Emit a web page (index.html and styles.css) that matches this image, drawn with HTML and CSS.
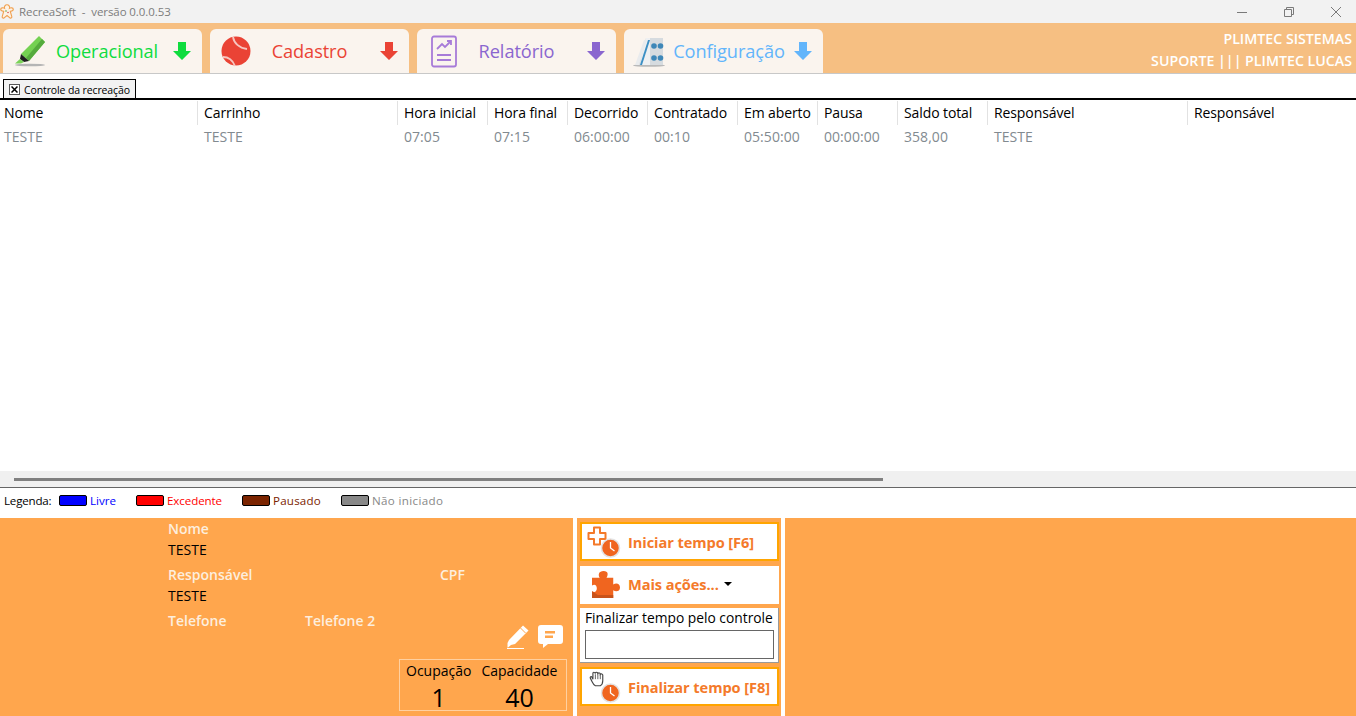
FILE: index.html
```html
<!DOCTYPE html>
<html lang="pt">
<head>
<meta charset="utf-8">
<title>RecreaSoft</title>
<link rel="stylesheet" href="styles.css">
</head>
<body>
<div class="app">
  <header class="titlebar">
    <svg class="logo" width="14" height="16" viewBox="0 0 14 16"><path d="M7 .8a2.600 2.600 0 0 1 2.500 3.400c1-.6 3.700-.6 3.800 1 .1 1.500-2 2-3 2.200l1.500 5.300c.3 1.200-1.400 2-2.200 1L7 11.500l-2.600 2.200c-.8 1-2.500.2-2.200-1l1.500-5.300c-1-.2-3.100-.7-3-2.200.1-1.600 2.800-1.600 3.800-1A2.600 2.600 0 0 1 7 .8z" fill="#fdf3e6" stroke="#f0a050" stroke-width="1.100"/><circle cx="6" cy="7" r=".8" fill="#5aa34a"/><circle cx="8" cy="8.500" r=".8" fill="#d9534f"/></svg>
    <span class="app-title">RecreaSoft &nbsp;-&nbsp; versão 0.0.0.53</span>
    <div class="window-controls">
      <svg width="12" height="12" viewBox="0 0 12 12"><path d="M1 6.500h10" stroke="#7a7a7a" fill="none"/></svg>
      <svg width="12" height="12" viewBox="0 0 12 12"><path d="M1.500 3.500h7v7h-7zM3.500 3.500v-2h7v7h-2" stroke="#7a7a7a" fill="none"/></svg>
      <svg width="12" height="12" viewBox="0 0 12 12"><path d="M1 1l10 10M11 1L1 11" stroke="#7a7a7a" fill="none"/></svg>
    </div>
  </header>

  <nav class="toolbar">
    <div class="tab tab-green">
      <svg class="tab-icon" width="40" height="36" viewBox="0 0 40 36"><ellipse cx="20" cy="32" rx="15" ry="1.300" fill="#b5b5b5"/><path d="M29 3l6 6-16 19-8-7z" fill="#74d152"/><path d="M32 6l3 3-16 19-3-3z" fill="#55ab3d"/><path d="M11 21l8 7-5 1-4-3z" fill="#1f1f1f"/><path d="M10 26l4 3-3 1.500H5z" fill="#7ad257"/></svg>
      <span class="tab-label">Operacional</span>
      <svg class="tab-arrow" width="18" height="18" viewBox="0 0 18 18"><path d="M5 0h8v9h5l-9 9-9-9h5z" fill="currentColor"/></svg>
    </div>
    <div class="tab tab-red">
      <svg class="tab-icon" width="40" height="36" viewBox="0 0 40 36"><circle cx="19" cy="18" r="14.500" fill="#ea4335"/><path d="M16 4c1 6 6 11 14 12M6 24c6 0 10 4 12 9" stroke="#f6c6c0" stroke-width="1.800" fill="none"/></svg>
      <span class="tab-label">Cadastro</span>
      <svg class="tab-arrow" width="18" height="18" viewBox="0 0 18 18"><path d="M5 0h8v9h5l-9 9-9-9h5z" fill="currentColor"/></svg>
    </div>
    <div class="tab tab-purple">
      <svg class="tab-icon" width="40" height="36" viewBox="0 0 40 36"><rect x="8" y="3.500" width="24" height="30" rx="2" fill="none" stroke="#a77bd8" stroke-width="1.800"/><path d="M13 16l5-5 3 3 6-6M23 8h4v4M13 22h14M13 27h14" fill="none" stroke="#a77bd8" stroke-width="1.800"/></svg>
      <span class="tab-label">Relatório</span>
      <svg class="tab-arrow" width="18" height="18" viewBox="0 0 18 18"><path d="M5 0h8v9h5l-9 9-9-9h5z" fill="currentColor"/></svg>
    </div>
    <div class="tab tab-blue">
      <svg class="tab-icon" width="40" height="36" viewBox="0 0 40 36"><ellipse cx="18" cy="32.500" rx="16" ry="1.300" fill="#b9b9b9"/><path d="M15 5h17v27H7z" fill="#d6dbdf"/><path d="M15 5h4v27H9z" fill="#eef0f2"/><path d="M4 32L13 7h3L8 32z" fill="#e9ebed"/><path d="M9 32l8-25h2l-8 25z" fill="#3c8fc4"/><circle cx="23" cy="13" r="2.800" fill="#3e87b8"/><circle cx="29.500" cy="13" r="2.800" fill="#3e87b8"/><circle cx="23" cy="25" r="2.800" fill="#3e87b8"/><circle cx="29.500" cy="25" r="2.800" fill="#3e87b8"/></svg>
      <span class="tab-label">Configuração</span>
      <svg class="tab-arrow" width="18" height="18" viewBox="0 0 18 18"><path d="M5 0h8v9h5l-9 9-9-9h5z" fill="currentColor"/></svg>
    </div>
    <div class="user-info">
      <div>PLIMTEC SISTEMAS</div>
      <div>SUPORTE ||| PLIMTEC LUCAS</div>
    </div>
  </nav>

  <div class="doc-strip">
    <div class="doc-tab">
      <span class="doc-close"><svg width="7" height="7" viewBox="0 0 7 7"><path d="M.5.500l6 6M6.500.500l-6 6" stroke="#000" stroke-width="1.500"/></svg></span>
      <span>Controle da recreação</span>
    </div>
  </div>

  <main class="grid-area">
    <div class="row row-head">
      <div class="cell">Nome</div><div class="cell">Carrinho</div><div class="cell">Hora inicial</div><div class="cell">Hora final</div><div class="cell">Decorrido</div><div class="cell">Contratado</div><div class="cell">Em aberto</div><div class="cell">Pausa</div><div class="cell">Saldo total</div><div class="cell">Responsável</div><div class="cell">Responsável</div>
    </div>
    <div class="row row-data">
      <div class="cell">TESTE</div><div class="cell">TESTE</div><div class="cell">07:05</div><div class="cell">07:15</div><div class="cell">06:00:00</div><div class="cell">00:10</div><div class="cell">05:50:00</div><div class="cell">00:00:00</div><div class="cell">358,00</div><div class="cell">TESTE</div><div class="cell"></div>
    </div>
  </main>

  <div class="hscroll"><div class="hscroll-thumb"></div></div>

  <div class="legend">
    <span class="legend-title">Legenda:</span>
    <span class="legend-item c-blue"><i class="swatch"></i>Livre</span>
    <span class="legend-item c-red"><i class="swatch"></i>Excedente</span>
    <span class="legend-item c-brown"><i class="swatch"></i>Pausado</span>
    <span class="legend-item c-gray"><i class="swatch"></i>Não iniciado</span>
  </div>

  <section class="bottom">
    <div class="info-panel">
      <div class="field-label">Nome</div>
      <div class="field-value">TESTE</div>
      <div class="field-row"><span class="field-label w-resp">Responsável</span><span class="field-label">CPF</span></div>
      <div class="field-value">TESTE</div>
      <div class="field-row"><span class="field-label w-tel">Telefone</span><span class="field-label">Telefone 2</span></div>
      <div class="info-icons">
        <svg width="22" height="24" viewBox="0 0 22 24"><path d="M16 .5l5.500 5L8 19l-4 1-3 2.500H.5V18l1.500-3z" fill="#fff"/><path d="M13.500 3l5 5" stroke="#ffa64d"/><path d="M0 23.500h17" stroke="#fff"/></svg>
        <svg width="25" height="23" viewBox="0 0 25 23"><path d="M3 0h19a3 3 0 0 1 3 3v13a3 3 0 0 1-3 3H10l-5 4v-4H3a3 3 0 0 1-3-3V3a3 3 0 0 1 3-3z" fill="#fff"/><path d="M7 6h10v2.500H7zM7 10.500h8V13H7z" fill="#ffa64d"/></svg>
      </div>
      <div class="stats">
        <div class="stat"><span class="stat-label">Ocupação</span><span class="stat-value">1</span></div>
        <div class="stat"><span class="stat-label">Capacidade</span><span class="stat-value">40</span></div>
      </div>
    </div>

    <div class="actions">
      <div class="action action-border">
        <svg class="action-icon" width="34" height="32" viewBox="0 0 34 32"><path d="M7 1.500h6v5.500h5.500v6H13v5.500H7V13H1.500V7H7z" fill="#fff" stroke="#f47a2a" stroke-width="2" stroke-linejoin="round"/><circle cx="23.500" cy="22" r="9" fill="#f0651f" stroke="#e3e3e3" stroke-width="1.500"/><path d="M23.500 16v6l4 3" stroke="#fff" stroke-width="1.300" fill="none"/></svg>
        <span class="action-label">Iniciar tempo [F6]</span>
      </div>
      <div class="action action-plain">
        <svg class="action-icon" width="28" height="28" viewBox="3 0 29 29"><path d="M3 8h8c-2-3-1-7 4-7s5 4 3 7h7v7c3-2 7-1 7 3s-4 5-7 3v8H3v-7c3 2 5 0 5-3s-2-5-5-3z" fill="#f0651f"/><path d="M3 22v7h22v-3H9z" fill="#c9531a"/></svg>
        <span class="action-label">Mais ações...</span>
        <svg class="caret" width="8" height="4" viewBox="0 0 8 4"><path d="M0 0h8L4 4z" fill="#000"/></svg>
      </div>
      <div class="control-box">
        <div class="control-label">Finalizar tempo pelo controle</div>
        <div class="control-input"></div>
      </div>
      <div class="action action-border">
        <svg class="action-icon" width="34" height="32" viewBox="0 0 34 32"><g transform="translate(1 0) scale(.82)"><path d="M5 13L3 9c-1-2 1-3 2-1l1 2V3c0-2 2-2 3 0 0-2 3-2 3 0 1-1 3-1 3 1 1-1 3 0 3 1v7c0 3-1 5-3 6H9c-2-1-3-3-4-5z" fill="#fff" stroke="#444" stroke-width="1.400"/><path d="M9 4v6M12 3v7M15 4v6" stroke="#444"/></g><circle cx="23.500" cy="22" r="9" fill="#f0651f" stroke="#e3e3e3" stroke-width="1.500"/><path d="M23.500 16v6l4 3" stroke="#fff" stroke-width="1.300" fill="none"/></svg>
        <span class="action-label">Finalizar tempo [F8]</span>
      </div>
    </div>
    <div class="rest"></div>
  </section>
</div>
</body>
</html>
```
FILE: styles.css
```css
* { box-sizing: border-box; }
html, body { margin: 0; height: 100%; overflow: hidden; background: #fff; }
body { font-family: "Open Sans", "Noto Sans", "Liberation Sans", sans-serif; color: #000; }
.app { width: 1356px; height: 716px; display: flex; flex-direction: column; }

.titlebar { height: 23px; background: #f2f2f2; display: flex; align-items: center; }
.logo { margin-right: 5px; flex: none; }
.app-title { font-size: 11.500px; color: #7c7c7c; letter-spacing: -.08px; }
.window-controls { margin-left: auto; display: flex; gap: 35px; padding-right: 14px; }

.toolbar { height: 51px; background: #f6bf82; border-bottom: 1px solid #c8c8c8; display: flex; align-items: flex-end; gap: 8px; padding-left: 3px; }
.tab { width: 199px; height: 44px; background: #faf4ee; border-radius: 6px 6px 0 0; display: flex; align-items: center; padding-left: 7px; }
.tab-icon { flex: none; }
.tab-label { font-size: 18.200px; flex: 1; text-align: center; white-space: nowrap; letter-spacing: -.08px; margin-right: 18px; }
.tab-arrow { flex: none; margin-right: 11px; }
.tab-green { color: #0fdc3e; }
.tab-green .tab-label { margin-right: 9px; }
.tab-red { color: #ea4335; }
.tab-purple { color: #8a66cf; }
.tab-blue { color: #62b5fb; }
.tab-blue .tab-label { margin-right: 7px; }
.user-info { margin-left: auto; padding: 4px 4px 0 0; align-self: center; text-align: right; color: #fff; font-weight: 600; font-size: 14.200px; line-height: 22px; white-space: nowrap; }

.doc-strip { background: #fff; border-bottom: 2px solid #000; padding: 5px 0 0 3px; display: flex; flex: none; height: 26px; }
.doc-tab { width: 133px; height: 19px; border: 1px solid #000; border-bottom: 0; background: #f2f2f2; display: flex; align-items: center; gap: 4px; padding: 1px 0 0 5px; font-size: 10.500px; letter-spacing: -.12px; white-space: nowrap; }
.doc-close { width: 11px; height: 11px; border: 1px solid #555; background: #fff; display: flex; align-items: center; justify-content: center; flex: none; }

.grid-area { flex: 1; background: #fff; min-height: 0; }
.row { display: grid; grid-template-columns: 197px 200px 90px 80px 80px 90px 80px 80px 90px 200px 169px; }
.cell { padding-left: 7px; font-size: 14px; white-space: nowrap; }
.row-head { height: 25px; align-items: stretch; padding-top: 1px; }
.row-head .cell { padding-left: 6px; line-height: 23px; border-left: 1px solid #e2e2e2; letter-spacing: -.1px; }
.row-head .cell:first-child { border-left: 0; padding-left: 4px; }
.row-data { height: 24px; color: #828a90; }
.row-data .cell { line-height: 24px; letter-spacing: .05px; }
.row-data .cell:first-child { padding-left: 4px; }

.hscroll { height: 17px; flex: none; background: #f0f0f0; border-bottom: 1px solid #666; padding: 7px 0 0 14px; }
.hscroll-thumb { width: 869px; height: 3px; background: #808080; }

.legend { height: 30px; flex: none; display: flex; align-items: center; padding: 0 0 5px 4px; font-size: 11.600px; }
.legend-title { width: 55px; letter-spacing: -.2px; }
.legend-item { display: flex; align-items: center; gap: 3px; white-space: nowrap; }
.swatch { width: 28px; height: 11px; border: 1px solid #000; border-radius: 2px; background: currentColor; display: block; }
.c-blue { color: #0000ff; width: 77px; }
.c-red { color: #ff0000; width: 106px; letter-spacing: -.1px; }
.c-brown { color: #7b2400; width: 99px; letter-spacing: .2px; }
.c-gray { color: #888; letter-spacing: .35px; }

.bottom { height: 198px; flex: none; display: flex; background: #ffa64d; }
.info-panel { width: 573px; flex: none; padding: 2px 0 5px 168px; display: flex; flex-direction: column; }
.field-label { font-size: 14px; font-weight: 600; color: #fdeede; line-height: 18px; white-space: nowrap; }
.field-value { font-size: 14px; line-height: 20px; margin-top: 2px; }
.field-row { display: flex; margin-top: 6px; }
.w-resp { width: 272px; }
.w-tel { width: 137px; }
.info-icons { display: flex; justify-content: flex-end; align-items: flex-start; gap: 9px; margin-top: -5px; padding-right: 10px; }
.stats { align-self: flex-end; width: 168px; height: 52px; margin-top: 10px; margin-right: 6px; border: 1px solid #ffd0a0; display: flex; padding: 2px 0 0 6px; gap: 10px; }
.stat { display: flex; flex-direction: column; align-items: center; }
.stat-label { font-size: 14px; line-height: 18px; white-space: nowrap; }
.stat-value { font-size: 25px; line-height: 34px; }

.actions { width: 212px; flex: none; border-left: 4px solid #fff; border-right: 4px solid #fff; padding: 4px 2px 0 3px; display: flex; flex-direction: column; gap: 4px; }
.action { height: 39px; background: #fff; display: flex; align-items: center; padding-left: 6px; color: #f47a2a; flex: none; }
.action-border { border: 2px solid #ffa500; padding: 1px 0 0 5px; }
.action-plain { margin-top: 1px; height: 38px; padding: 0 0 2px 12px; }
.action-icon { flex: none; margin-right: 7px; }
.action-plain .action-icon { margin-right: 8px; }
.action-label { font-size: 14.600px; font-weight: 700; white-space: nowrap; letter-spacing: -.08px; }
.caret { margin-left: 5px; }
.control-box { height: 55px; background: #fff; flex: none; border-right: 1px solid #999; border-bottom: 1px solid #999; padding: 0 4px 0 5px; }
.control-label { font-size: 13.800px; line-height: 19px; white-space: nowrap; }
.control-input { height: 29px; margin-top: 3px; border: 1px solid #666; background: #fff; }
.rest { flex: 1; }
```
